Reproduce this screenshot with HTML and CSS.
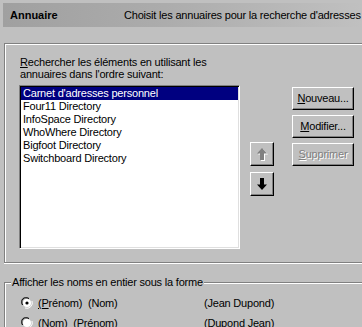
FILE: index.html
```html
<!DOCTYPE html>
<html lang="fr">
<head>
<meta charset="utf-8">
<title>Annuaire</title>
<link rel="stylesheet" href="styles.css">
</head>
<body>
<div class="page">
  <div class="header">
    <span class="title">Annuaire</span>
    <span class="desc">Choisit les annuaires pour la recherche d'adresses</span>
  </div>

  <div class="group group-list">
    <div class="label"><u>R</u>echercher les éléments en utilisant les<br>annuaires dans l'ordre suivant:</div>
    <div class="list-row">
      <ul class="listbox">
        <li class="selected">Carnet d'adresses personnel</li>
        <li>Four11 Directory</li>
        <li>InfoSpace Directory</li>
        <li>WhoWhere Directory</li>
        <li>Bigfoot Directory</li>
        <li>Switchboard Directory</li>
      </ul>
      <div class="arrows">
        <div class="btn arrow-btn disabled">
          <svg class="arrow" width="11" height="13" viewBox="0 0 11 13">
            <polygon class="arrow-shadow" points="6,1 11,6.5 8,6.5 8,13 4,13 4,6.5 1,6.5" />
            <polygon class="arrow-fill" points="5,0 10,5.5 7,5.5 7,12 3,12 3,5.5 0,5.5" />
          </svg>
        </div>
        <div class="btn arrow-btn">
          <svg class="arrow" width="11" height="13" viewBox="0 0 11 13">
            <polygon fill="#000" points="3,0 7,0 7,6.5 10,6.5 5,12 0,6.5 3,6.5" />
          </svg>
        </div>
      </div>
      <div class="buttons">
        <div class="btn push"><u>N</u>ouveau...</div>
        <div class="btn push"><u>M</u>odifier...</div>
        <div class="btn push disabled-text"><u>S</u>upprimer</div>
      </div>
    </div>
  </div>

  <fieldset class="group group-names">
    <legend>Afficher les noms en entier sous la forme</legend>
    <div class="radio-row">
      <svg class="radio" width="12" height="12" viewBox="0 0 12 12">
        <path d="M1,8 A5,5 0 0 1 8,1" stroke="#808080" fill="none" />
        <path d="M2,8 A4,4 0 0 1 8,2" stroke="#000" fill="none" />
        <circle cx="6" cy="6" r="4" fill="#fff" />
        <path d="M11,4 A5.5,5.5 0 0 1 4,11" stroke="#fff" fill="none" />
        <circle cx="6" cy="6" r="1.6" fill="#000" />
      </svg>
      <span class="opt"><u>(P</u>rénom)&nbsp; (Nom)</span>
      <span class="ex">(Jean Dupond)</span>
    </div>
    <div class="radio-row">
      <svg class="radio" width="12" height="12" viewBox="0 0 12 12">
        <path d="M1,8 A5,5 0 0 1 8,1" stroke="#808080" fill="none" />
        <path d="M2,8 A4,4 0 0 1 8,2" stroke="#000" fill="none" />
        <circle cx="6" cy="6" r="4" fill="#fff" />
        <path d="M11,4 A5.5,5.5 0 0 1 4,11" stroke="#fff" fill="none" />
      </svg>
      <span class="opt">(Nom)&nbsp; (Prénom)</span>
      <span class="ex">(Dupond Jean)</span>
    </div>
  </fieldset>
</div>
</body>
</html>
```

FILE: styles.css
```css
html, body {
  margin: 0;
  padding: 0;
  background: #c0c0c0;
  overflow: hidden;
}

body {
  font-family: "Liberation Sans", Arial, sans-serif;
  font-size: 11px;
  line-height: 13px;
  letter-spacing: -0.2px;
  color: #000;
  width: 362px;
  height: 327px;
}

.page {
  padding-top: 3px;
  width: 362px;
  height: 324px;
  overflow: hidden;
}

.header {
  margin-left: 3px;
  height: 24px;
  display: flex;
  align-items: center;
  padding-left: 7px;
  background: linear-gradient(to right, #a0a0a0 0%, #acacac 45%, #c0c0c0 100%);
}

.title {
  font-weight: bold;
  width: 114px;
  flex: none;
  letter-spacing: 0;
}

.desc {
  white-space: nowrap;
}

.group {
  margin-left: 4px;
  width: 358px;
  box-sizing: border-box;
  border: 1px solid #808080;
  border-right: none;
  box-shadow: inset 1px 1px 0 #fff, 0 1px 0 #fff;
}

.group-list {
  margin-top: 16px;
  padding: 12px 0 13px 14px;
  height: 220px;
}

.label {
  line-height: 12px;
  padding-left: 1px;
}

.list-row {
  display: flex;
  margin-top: 5px;
}

.listbox {
  list-style: none;
  margin: 0;
  padding: 1px;
  width: 221px;
  height: 164px;
  box-sizing: border-box;
  background: #fff;
  border: 1px solid;
  border-color: #808080 #fff #fff #808080;
  box-shadow: inset 1px 1px 0 #000, inset -1px -1px 0 #dfdfdf;
  flex: none;
}

.listbox li {
  height: 13px;
  line-height: 13px;
  padding-left: 2px;
  white-space: nowrap;
}

.listbox li.selected {
  background: #000080;
  color: #fff;
}

.btn {
  box-sizing: border-box;
  background: #c0c0c0;
  border: 1px solid;
  border-color: #fff #000 #000 #fff;
  box-shadow: inset -1px -1px 0 #808080;
}

.arrows {
  display: flex;
  flex-direction: column;
  gap: 6px;
  margin-left: 10px;
  margin-top: 57px;
}

.arrow-btn {
  width: 24px;
  height: 24px;
  display: flex;
  align-items: center;
  justify-content: center;
}

.arrow {
  display: block;
}

.arrow-fill {
  fill: #808080;
}

.arrow-shadow {
  fill: #fff;
}

.buttons {
  display: flex;
  flex-direction: column;
  gap: 5px;
  margin-left: 18px;
  margin-top: 2px;
}

.push {
  width: 62px;
  height: 23px;
  display: flex;
  align-items: center;
  justify-content: center;
  white-space: nowrap;
}

.disabled-text {
  color: #808080;
  text-shadow: 1px 1px 0 #fff;
}

.group-names {
  margin: 13px 0 0 4px;
  padding: 4px 0 0 0;
  min-width: 0;
  height: 52px;
  border-bottom: none;
  overflow: hidden;
}

.group-names legend {
  padding: 0 1px;
  margin-left: 6px;
  background: #c0c0c0;
  line-height: 13px;
}

.radio-row {
  display: flex;
  align-items: center;
  height: 20px;
  padding-left: 16px;
}

.radio {
  flex: none;
  display: block;
}

.opt {
  margin-left: 5px;
  width: 166px;
  white-space: nowrap;
}

.ex {
  white-space: nowrap;
}
```
